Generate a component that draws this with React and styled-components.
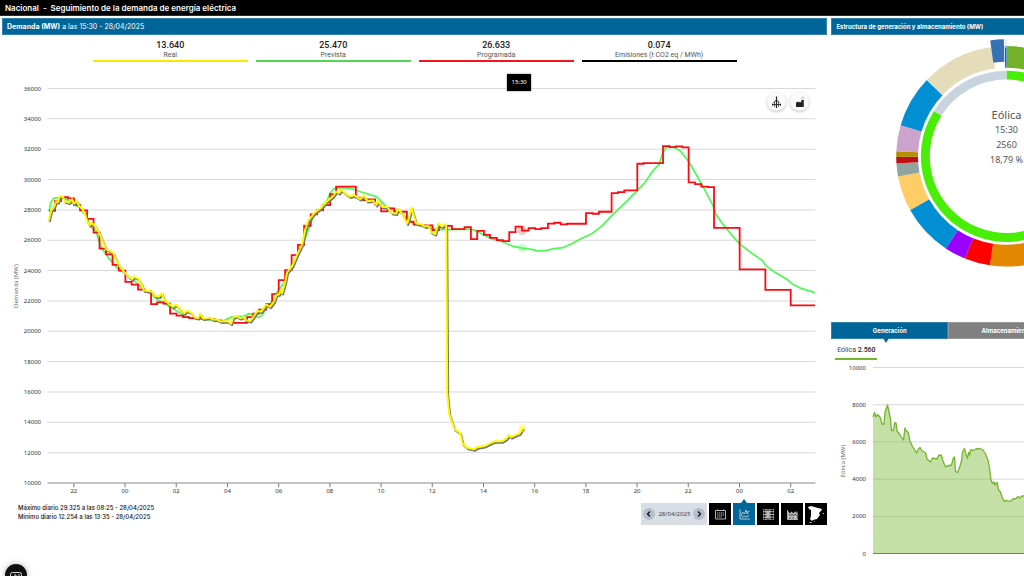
import React, { useState } from "react";
import styled, { createGlobalStyle } from "styled-components";

const GlobalStyle = createGlobalStyle`
  * { box-sizing: border-box; }

  body {
    margin: 0;
    background: #fff;
    color: #222;
    font-family: Roboto, sans-serif;
    overflow-x: hidden;
  }

  button {
    border: 0;
    padding: 0;
    font-family: inherit;
    cursor: pointer;
  }
`;

const Header = styled.header`
  display: flex;
  align-items: center;
  height: 16px;
  padding: 0 5px;
  background: #000;
  border-bottom: 1px solid #2b2b2b;
  color: #fff;
`;

const Title = styled.h1`
  display: flex;
  gap: 4px;
  margin: 0;
  font-family: Inter, Roboto, sans-serif;
  font-size: 8px;
  line-height: 10px;
  font-weight: 600;
`;

const Columns = styled.main`
  display: grid;
  grid-template-columns: minmax(0, 30fr) minmax(0, 7fr);
  gap: 4px;
  padding: 2px 0 0 2px;
`;

const Demand = styled.section`
  min-width: 0;
`;

const Structure = styled.section`
  min-width: 0;
  overflow: hidden;
`;

const Wide = styled.div`
  min-width: 350px;
`;

const Bar = styled.h2`
  height: 17px;
  margin: 0;
  padding: 0 4px;
  background: #006699;
  border: 1px solid #2f83ac;
  color: #fff;
  font-family: Inter, Roboto, sans-serif;
  font-size: ${(props) => (props.$strong ? 6 : 7)}px;
  line-height: 15px;
  font-weight: ${(props) => (props.$strong ? 700 : 400)};
`;

const Legend = styled.div`
  display: grid;
  grid-template-columns: repeat(4, 1fr);
  gap: 8px;
  padding: 5px 11% 0;
`;

const LegendItem = styled.div`
  height: 22px;
  border-bottom: 2px solid ${(props) => props.$color};
  text-align: center;
`;

const Value = styled.div`
  font-size: 9px;
  line-height: 11px;
  font-weight: 500;
`;

const Label = styled.div`
  color: #555;
  font-size: 7px;
  line-height: 8px;
`;

const ChartBox = styled.div`
  position: relative;
  margin-top: 4px;
`;

const Drawing = styled.svg`
  display: block;
  width: 100%;
  height: auto;
  font-family: "Noto Sans", sans-serif;
  font-size: 6px;
  fill: #333;
`;

const Tooltip = styled.div`
  position: absolute;
  top: 8px;
  left: 61.2%;
  width: 24px;
  height: 17px;
  background: #000;
  box-shadow: 0 0 2px #888;
  color: #fff;
  font-family: "Noto Sans", sans-serif;
  font-size: 6px;
  line-height: 17px;
  text-align: center;
`;

const RoundTools = styled.div`
  position: absolute;
  top: 26px;
  right: 18px;
  display: flex;
  gap: 4px;
`;

const RoundButton = styled.button`
  display: grid;
  place-items: center;
  width: 19px;
  height: 19px;
  border-radius: 50%;
  background: #fafafa;
  box-shadow: 0 1px 3px rgba(0, 0, 0, 0.25);
`;

const Footer = styled.div`
  display: flex;
  justify-content: space-between;
  align-items: flex-start;
  padding: 3px 0 0 16px;
`;

const Stats = styled.p`
  margin: 0;
  color: #111;
  font-family: Inter, Roboto, sans-serif;
  font-size: 6px;
  line-height: 9px;
  font-weight: 500;
`;

const Toolbar = styled.div`
  display: flex;
  gap: 2px;
`;

const DatePicker = styled.div`
  display: flex;
  align-items: center;
  justify-content: space-between;
  width: 66px;
  height: 22px;
  padding: 0 2px;
  background: #d9dde6;
  color: #444;
  font-family: "Noto Sans", sans-serif;
  font-size: 6px;
`;

const Arrow = styled.button`
  display: grid;
  place-items: center;
  width: 12px;
  height: 12px;
  border-radius: 50%;
  background: #b7bfcc;
`;

const ToolButton = styled.button`
  position: relative;
  display: grid;
  place-items: center;
  width: 22px;
  height: 22px;
  background: ${(props) => (props.$active ? "#006699" : "#000")};

  &::before {
    content: "";
    display: ${(props) => (props.$active ? "block" : "none")};
    position: absolute;
    top: -4px;
    left: 8px;
    border: 3px solid transparent;
    border-top: 0;
    border-bottom: 4px solid #006699;
  }
`;

const Tabs = styled.div`
  display: grid;
  grid-template-columns: repeat(3, 1fr);
`;

const Tab = styled.button`
  position: relative;
  height: 17px;
  background: ${(props) => (props.$active ? "#006699" : "#808080")};
  border: 1px solid ${(props) => (props.$active ? "#2f83ac" : "#999")};
  color: #fff;
  font-family: Inter, Roboto, sans-serif;
  font-size: 6px;
  line-height: 15px;
  font-weight: 700;

  &::after {
    content: "";
    display: ${(props) => (props.$active ? "block" : "none")};
    position: absolute;
    top: 15px;
    left: 51px;
    border: 3px solid transparent;
    border-bottom: 0;
    border-top: 5px solid #006699;
  }
`;

const SourceLegend = styled.div`
  width: 42px;
  height: 21px;
  margin: 0 4px 2px;
  padding-top: 7px;
  border-bottom: 2px solid #73b52b;
  color: #444;
  font-size: 7px;
  line-height: 8px;
  text-align: center;
  white-space: nowrap;

  b { font-weight: 500; color: #222; }
`;

const Help = styled.button`
  position: fixed;
  left: 5px;
  bottom: -10px;
  display: flex;
  justify-content: center;
  padding-top: 8px;
  width: 22px;
  height: 22px;
  border-radius: 50%;
  background: #111;
  box-shadow: 0 0 6px rgba(0, 0, 0, 0.3);
`;

const series = [
  { value: "13.640", label: "Real", color: "#ffe600" },
  { value: "25.470", label: "Prevista", color: "#4fd84f" },
  { value: "26.633", label: "Programada", color: "#f5141c" },
  { value: "0.074", label: "Emisiones (t CO2 eq / MWh)", color: "#000" },
];

// scheduled demand: [end of the step, level]
const scheduled = [
  [55, 210.7], [61, 201], [68, 197], [74, 198.3], [80, 205], [87, 210.3], [93.5, 218.8],
  [99.5, 232.5], [106, 248.5], [112.5, 254.3], [118.8, 264.8], [125.3, 270.5], [131.5, 281.8],
  [138, 284.5], [144.5, 289.5], [151, 291], [157, 304], [163.5, 302.3], [170, 303.5],
  [176.5, 313.5], [183, 315.5], [189, 317], [195, 318], [202, 318], [208, 319], [214.5, 319],
  [221, 320.5], [227.5, 321.5], [247, 322.8], [253, 317], [259, 313.5], [266, 309.5],
  [272, 304], [278.6, 294], [285, 280], [291.5, 270], [297.8, 255], [304, 244.7],
  [310.5, 225.7], [317, 214.3], [323, 210], [330, 205], [336, 194], [355.7, 186.5],
  [362, 197.5], [368, 200], [375, 199.3], [381, 204.5], [387.3, 211.3], [394, 208.3],
  [406.7, 211.7], [413.5, 221.7], [420, 224.5], [432.3, 225.3], [438.7, 230], [445, 227.3],
  [451.7, 225.8], [464.3, 229], [470.7, 227], [477, 239], [483.7, 230.7], [489.7, 234.7],
  [496.7, 237.7], [502.7, 240], [509, 241], [515.3, 232], [521.7, 226.5], [528.3, 230.5],
  [535, 228], [541, 229], [547.7, 228], [554, 223.5], [560.5, 222.7], [566.7, 224.3],
  [585.7, 223.7], [592.3, 213], [598.7, 213.7], [611.3, 211.7], [617.7, 193], [624, 192],
  [637, 190.3], [643.3, 163.7], [662.7, 163], [669, 146], [675.5, 147], [682, 146.3],
  [688.3, 147.3], [694.7, 182.3], [701, 184], [707.3, 186.5], [713.7, 187], [739.3, 227.7],
  [765, 269.3], [790.3, 289.7], [814.7, 305.3],
];

const forecast =
  "49,211 51,202 54,198 59,197.5 66,199 74,204 80,208 86,216 90,226 96,231 99,242 103,250 108,257 114,264 119,270 125,273 131,278 138,284 144,290 151,294 158,300 164,303 170,307 177,311 183,315 190,318 200,319 215,320 224,320.5 229,318 233,316.5 244,316 249,313.5 254,315 258,317.5 262,315 268,305 274,300 277,292 283,284 288,272 294,261 302,247 307,233 313,217 320,209 327,200 330,193 334,188.5 342,187.5 352,188.5 358,191 366,193.5 376,196.5 380,200 386,206.5 396,210.5 403,214 407,220 415,224 425,227 437,229.5 450,229.5 468,229 474,230 482,234 492,239 502,241.5 512,246 522,248 530,249 538,251 545,250.5 554,248.5 563,247.5 573,243 582,238 591,234 602,225.5 612,215 625,202.5 637,190.5 645,182 652,171.5 659,164 662,154 665,148.5 669,146 675,148 680,151 688,161 695,173 704,189 712,204 716,215 722,223.5 731,234.5 739,243.5 750,252 762,260.5 766,266 775,272.5 787,279.5 792,284 800,288 808,290.5 814.5,292.5";

const measured =
  "48.7,220.5 51,210.5 54,206.5 56,201.5 58,202 59.5,196 63,197 65,201.5 69,202.5 72,199 74,203.5 77,201 79,206 82,208.5 85,214 87,221 89.5,225 91.5,222.5 95,226 99.5,233.5 103,242 106,249 113,252.5 117,262 121,268 125,273 129,277 132,279 134,276.5 138,278.5 141,283 144,290.5 149,291 152,291.5 155,296 159,296.5 161.5,293 164,299 169,304 173,306.5 176,304.5 180,309 184,313 187,310.5 191,312.5 195,317.5 198,318 200,313.5 203,318.5 207,318 210,317.5 213,319.5 217,319.5 221,321.5 226,321 229,322 231,323.5 233,317.5 236,316 240,318 243,317 246,320 250,321 253,317 257,311 261,311.5 266,304.5 270,306.5 274,301 276,295 279,294 280,290.5 282,293 285,282 287,272 292,266 297,254.5 302,244 305,230 308,220.5 314,213 320,208.5 327,201 333,196 336,191.5 339,193 341,189.5 346,194 350,196.5 354,195 360,199 364,195.5 367,201 373,200.5 376,205 378,201 382,207 387,207 392,213 396,213.5 398,208.5 402,213.5 407,223.5 409,217 411.3,207.5 414,217 416,223.5 421,224 425,226.5 428,225.5 431,232 435,234 438,223.5 442,226.5 445,224 446,226 447,394 449,414 454,428.5 460,433 462.5,443.5 467,447.5 474,449 477,447 485,445.5 491,442.5 495,441 502,441 506,438.5 509,435 511,437 516,434.5 519,433.5 523,427.5";

const wind =
  "873,417 874.5,412.5 876,417 877.5,414.5 879,416 880.5,418 882,424 884,424 885,412.5 887.5,405 889,412 890.5,419 891.5,430.5 893.5,430.5 894.5,423 896,423 897,431 900,435 903.5,440 905,428 906,430.5 908,432 910,441 912.5,446.5 914.5,449.5 916.5,453 918.5,449 920,447.5 922,451 925.5,452.5 927,459 930.5,462 932.5,458 937,459 939,455 941.5,455.5 943,461 945.5,467 947,466 951.5,465 953,459 954.5,457 955.5,471.5 957.5,472.5 960,466 961.5,461 962.5,452 964.5,448.5 966,454.5 967.5,458.5 968.5,452.5 969.5,455 970.5,450 973,450.5 976,449 980,448.5 983,450 985.5,454 988,460 989.5,468 991,480 992.5,483.5 994,482 995,485 997,482.5 998.5,490 1000.5,492 1002,497 1004,501 1007,500.5 1010,501.5 1013,499 1016,498.5 1018,496.5 1020,498 1022,496 1025,496 1040,492 1060,485 1090,498 1120,506 1170,500";

const mix = [
  [0, 67.6, "#73b129"],
  [67.6, 188.7, "#e38600"],
  [188.7, 202.1, "#ff0000"],
  [202.1, 213.4, "#9900ff"],
  [213.4, 240.9, "#008fd3"],
  [240.9, 259.4, "#ffcc66"],
  [259.4, 266.2, "#90a5a0"],
  [266.2, 269.7, "#bd1015"],
  [269.7, 272.6, "#b68f00"],
  [272.6, 286.3, "#cca3ca"],
  [286.3, 313.7, "#008fd3"],
  [313.7, 352.5, "#e5ddb9"],
  [359.1, 360, "#0070d8"],
];

const steps = `M49 ${scheduled[0][1]}` + scheduled.map(([x, y]) => `V${y}H${x}`).join("");

const arc = (from, to, inner, outer) => {
  const point = (angle, r) => {
    const a = (angle * Math.PI) / 180;
    return `${(175.5 + r * Math.sin(a)).toFixed(2)} ${(121.3 - r * Math.cos(a)).toFixed(2)}`;
  };
  const large = to - from > 180 ? 1 : 0;
  return `M${point(from, outer)}A${outer} ${outer} 0 ${large} 1 ${point(to, outer)}L${point(to, inner)}A${inner} ${inner} 0 ${large} 0 ${point(from, inner)}Z`;
};

const DemandChart = () => (
  <Drawing viewBox="2 66 825 434" role="img" aria-label="Demanda (MW)">
    {Array.from({ length: 14 }, (_, i) => {
      const y = 88.5 + i * 30.33;
      return (
        <g key={i}>
          <line x1="47.5" x2="815" y1={y} y2={y} stroke={i === 13 ? "#888" : "#d8d8d8"} />
          <text x="41" y={y + 2} textAnchor="end">{36000 - i * 2000}</text>
        </g>
      );
    })}
    {Array.from({ length: 15 }, (_, i) => {
      const x = 73.8 + i * 51.18;
      return (
        <g key={i}>
          <line x1={x} x2={x} y1="483" y2="487" stroke="#777" />
          <text x={x} y="492.5" textAnchor="middle">{String((22 + i * 2) % 24).padStart(2, "0")}</text>
        </g>
      );
    })}
    <text transform="translate(17.5 286) rotate(-90)" textAnchor="middle" fill="#666">Demanda (MW)</text>
    <g fill="none" strokeLinejoin="round">
      <polyline points={forecast} stroke="#4dfa55" strokeWidth="1.7" />
      <path d={steps} stroke="#ff0a12" strokeWidth="1.8" strokeLinejoin="miter" />
      <polyline points={measured} transform="translate(1 1.5)" stroke="#777" strokeWidth="2" />
      <polyline points={measured} stroke="#fffa00" strokeWidth="2" />
    </g>
    <circle cx="522" cy="248" r="4.5" fill="#4dfa55" opacity=".25" />
    <circle cx="522" cy="230.5" r="4.5" fill="#ff0a12" opacity=".25" />
    <circle cx="522" cy="428" r="4" fill="#fffa00" opacity=".35" />
  </Drawing>
);

const Donut = () => (
  <Drawing viewBox="0 0 350 287" role="img" aria-label="Estructura de generación">
    {mix.map(([from, to, color]) => (
      <path key={from} d={arc(from, to, 88.5, 110.3)} fill={color} />
    ))}
    <path d={arc(352, 358.7, 94.5, 117)} fill="#3670b5" />
    <path d="M175 4v9" stroke="#cddceb" />
    <path d={arc(0, 302, 76.7, 85.6)} fill="#48ee06" />
    <path d={arc(302, 360, 76.7, 85.6)} fill="#c8d5df" />
    <g fontSize="9" fill="#555" textAnchor="middle">
      <text x="175.5" y="84" fontSize="11">Eólica</text>
      <text x="175.5" y="98">15:30</text>
      <text x="175.5" y="113">2560</text>
      <text x="175.5" y="128">18,79 %</text>
    </g>
  </Drawing>
);

const WindChart = () => (
  <Drawing viewBox="831 362 350 196" role="img" aria-label="Eólica (MW)">
    {[10000, 8000, 6000, 4000, 2000, 0].map((v, i) => (
      <g key={v}>
        <line x1="873" x2="1172" y1={367.5 + i * 37.2} y2={367.5 + i * 37.2} stroke="#d8d8d8" />
        <text x="866" y={369.5 + i * 37.2} textAnchor="end">{v}</text>
      </g>
    ))}
    <polygon points={`873,553.5 ${wind} 1170,553.5`} fill="#73b52b" fillOpacity=".42" />
    <polyline points={wind} fill="none" stroke="#73b52b" strokeWidth="1.3" strokeLinejoin="round" />
    <line x1="873" x2="1172" y1="553.5" y2="553.5" stroke="#777" />
    <text transform="translate(844.5 461) rotate(-90)" textAnchor="middle" fill="#666">Eólica (MW)</text>
  </Drawing>
);

const Pylon = () => (
  <svg width="11" height="12" viewBox="0 0 11 12" fill="none" stroke="#222">
    <path d="M5.500 .5V12" strokeWidth="1.200" />
    <path d="M2.500 6.500L5.500 4L8.500 6.500M1 8.500h9" strokeWidth=".9" />
    <path d="M1.500 7.500V10M3.500 6V11M7.500 6V11M9.500 7.500V10" strokeWidth=".7" />
  </svg>
);

const Factory = () => (
  <svg width="10" height="12" viewBox="0 0 10 12">
    <path d="M1 11V6.500h1V5.800h1.500v.7L5 5.800v.7l1.300-.7V4h2.500v7z" fill="#222" />
    <path d="M7.500 3.500C5.500 2 7 .5 8.200 1S9 2.800 8 2.600" fill="none" stroke="#aaa" strokeWidth=".7" />
  </svg>
);

const Chevron = ({ d }) => (
  <svg width="6" height="6" viewBox="0 0 6 6" fill="none" stroke="#111" strokeWidth="1.3">
    <path d={d} />
  </svg>
);

const tools = [
  {
    name: "Calendario",
    icon: (
      <>
        <path d="M.5 1.500h10v8.500H.5zM2.500.5v1M8.500.5v1" />
        <path d="M2 4h7M2 6h7M2 8h5" strokeDasharray="1.500 .5" />
      </>
    ),
  },
  { name: "Gráfico", icon: <path d="M1 0v10h10M2 7.500L3.500 3l2 2 1.500-4 1.200 4L9.500 2l1 1M3 8.500L5 7l2 1 3-1.500" /> },
  {
    name: "Tabla",
    icon: (
      <>
        <path d="M0 0h11v11H0zM0 2.700h11M0 5.500h11M0 8.200h11M3 0v11M7 0v11" />
        <path d="M3.500 1.500h3v8h-3z" fill="#bbb" stroke="none" />
      </>
    ),
  },
  {
    name: "Evolución",
    icon: (
      <>
        <path d="M.5 1v9.500H11" />
        <path d="M1 2l2 2.500 1.500-2 2 2L8 2l1 2 1.500-2V10H1z" fill="#bbb" stroke="none" />
        <path d="M2 5l1.500 2L5 5l1.500 2L8 5l2 2M3 10V8M6 10V8" stroke="#222" strokeWidth=".6" />
      </>
    ),
  },
];

const App = () => {
  const [tab, setTab] = useState("Generación");
  const [view, setView] = useState("Gráfico");

  return (
    <>
      <GlobalStyle />
      <Header>
        <Title>
          <span>Nacional</span>
          <span>-</span>
          <span>Seguimiento de la demanda de energía eléctrica</span>
        </Title>
      </Header>
      <Columns>
        <Demand>
          <Bar><b>Demanda (MW)</b> a las 15:30 - 28/04/2025</Bar>
          <Legend>
            {series.map((item) => (
              <LegendItem key={item.label} $color={item.color}>
                <Value>{item.value}</Value>
                <Label>{item.label}</Label>
              </LegendItem>
            ))}
          </Legend>
          <ChartBox>
            <DemandChart />
            <Tooltip>15:30</Tooltip>
            <RoundTools>
              <RoundButton aria-label="Generación"><Pylon /></RoundButton>
              <RoundButton aria-label="Emisiones"><Factory /></RoundButton>
            </RoundTools>
          </ChartBox>
          <Footer>
            <Stats>
              Máximo diario 29.325 a las 08:25 - 28/04/2025<br />
              Mínimo diario 12.254 a las 13:35 - 28/04/2025
            </Stats>
            <Toolbar>
              <DatePicker>
                <Arrow aria-label="Día anterior"><Chevron d="M4 .5L1.5 3 4 5.5" /></Arrow>
                28/04/2025
                <Arrow aria-label="Día siguiente"><Chevron d="M2 .5L4.500 3 2 5.5" /></Arrow>
              </DatePicker>
              {tools.map((tool) => (
                <ToolButton
                  key={tool.name}
                  aria-label={tool.name}
                  $active={view === tool.name}
                  onClick={() => setView(tool.name)}
                >
                  <svg width="11" height="11" viewBox="0 0 11 11" fill="none" stroke="#ddd" strokeWidth=".8">
                    {tool.icon}
                  </svg>
                </ToolButton>
              ))}
              <ToolButton aria-label="Mapa">
                <svg width="20" height="20" viewBox="0 0 20 20" fill="#fff">
                  <path d="M2 3l3-1 7 2 4 1-1 2-2 2 1 2-3 4-4 1-1 1-2-2 1-3V6L3 5zM16 10l2-1v1zM3 19l2-1 1 1zM8 18l1-1v1z" />
                </svg>
              </ToolButton>
            </Toolbar>
          </Footer>
        </Demand>
        <Structure>
          <Wide>
            <Bar $strong>Estructura de generación y almacenamiento (MW)</Bar>
            <Donut />
            <Tabs>
              {["Generación", "Almacenamiento"].map((name) => (
                <Tab key={name} $active={tab === name} onClick={() => setTab(name)}>{name}</Tab>
              ))}
            </Tabs>
            <SourceLegend>Eólica <b>2.560</b></SourceLegend>
            <WindChart />
          </Wide>
        </Structure>
      </Columns>
      <Help aria-label="Ayuda">
        <svg width="12" height="8" viewBox="0 0 12 8" fill="none" stroke="#ddd">
          <rect x=".5" y=".5" width="11" height="7" rx="2" />
          <path d="M4 3h2v4M8 3h2" />
        </svg>
      </Help>
    </>
  );
};

export default App;
